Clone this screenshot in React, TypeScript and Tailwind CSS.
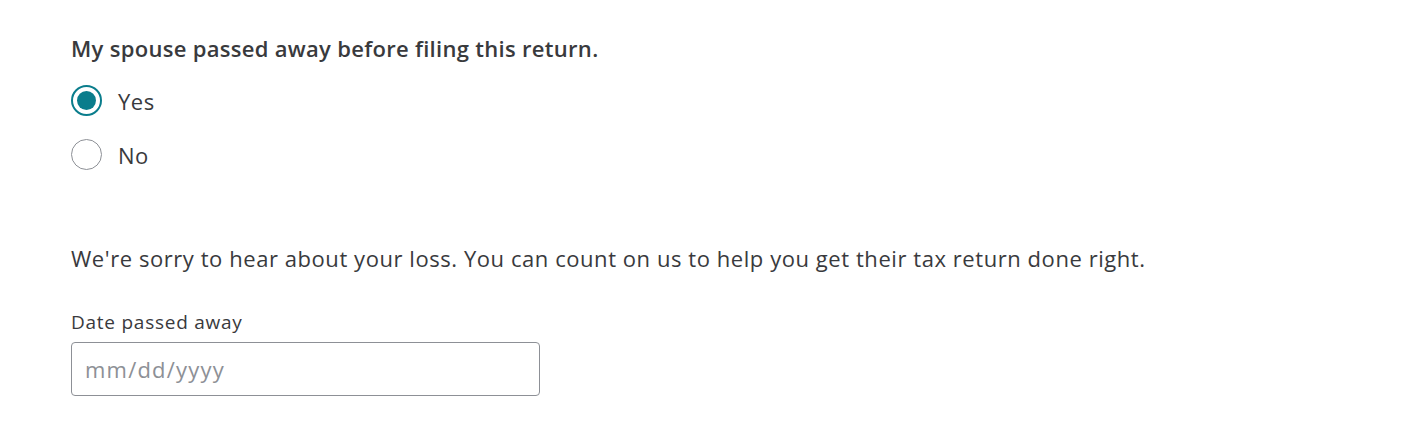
export default function App() {
  return (
    <div className="w-[1413px] h-[422px] bg-white pl-[71px] pt-[34px] text-[#393a3d]" style={{ fontFamily: '"Open Sans", "Noto Sans", sans-serif' }}>
      <div className="text-[22px] leading-[28px] font-semibold tracking-[0.3px]">My spouse passed away before filing this return.</div>
      <div className="mt-[23px] flex flex-col gap-[23px]">
        <label className="flex items-center gap-[16px]">
          <span className="w-[31px] h-[31px] rounded-full border-2 border-[#0a7d8c] flex items-center justify-center">
            <span className="w-[19px] h-[19px] rounded-full bg-[#0a7d8c]" />
          </span>
          <span className="text-[22px] leading-[28px] tracking-[0.5px]">Yes</span>
        </label>
        <label className="flex items-center gap-[16px]">
          <span className="w-[31px] h-[31px] rounded-full border border-[#8d9096]" />
          <span className="text-[22px] leading-[28px] tracking-[0.5px]">No</span>
        </label>
      </div>
      <p className="mt-[74px] text-[22px] leading-[28px] tracking-[0.56px]">We're sorry to hear about your loss. You can count on us to help you get their tax return done right.</p>
      <div className="mt-[38px] text-[19px] leading-[24px] tracking-[0.75px]">Date passed away</div>
      <div className="mt-[8px] w-[469px] h-[54px] rounded-[4px] border border-[#8d9096] flex items-center px-[13px]">
        <span className="text-[22px] tracking-[1.2px] text-[#8d9096]">mm/dd/yyyy</span>
      </div>
    </div>
  );
}
